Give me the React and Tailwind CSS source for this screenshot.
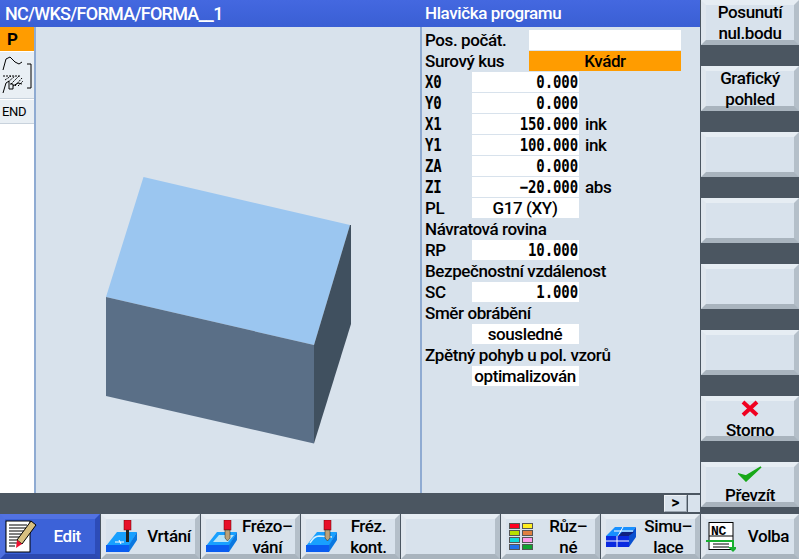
const font = "font-['Roboto','Liberation_Sans',sans-serif]";

function Key({ children, active, className = '' }) {
    const tone = active
        ? 'border-t-[#5272e2] border-l-[#4f70e0] border-r-[#2d4cb8] border-b-[#2c49b0] bg-[#3c62d8] text-white'
        : 'border-t-[#e6edf3] border-l-[#e0e7ee] border-r-[#b4bfc9] border-b-[#a9b4be] bg-[#d8e2ec] text-black';
    return (
        <div className={`relative flex items-center justify-center border-[5px] text-[17px] leading-[21px] font-medium tracking-[-0.4px] text-center ${tone} ${className}`}>
            {children}
        </div>
    );
}

function Mono({ children }) {
    return <span className="inline-block origin-center -translate-y-px scale-y-[1.25] font-['DejaVu_Sans_Mono',monospace] text-[14px] font-bold tracking-[-0.1px]">{children}</span>;
}

function Row({ label, value, unit, wide, orange, mono, align = 'right' }) {
    if (value === undefined) {
        return <div className="h-[21px] leading-[21px]">{label}</div>;
    }
    return (
        <div className="flex h-[21px]">
            <div className={`leading-[20px] ${wide ? 'w-[104px]' : 'w-[47px]'}`}>{mono ? <Mono>{label}</Mono> : label}</div>
            <div className={`h-[20px] leading-[20px] ${wide ? 'w-[152px] text-center' : 'w-[107px] pr-px'} ${orange ? 'bg-[#ff9c00]' : 'bg-white'} ${!wide && align === 'right' ? 'text-right' : ''} ${!wide && align === 'center' ? 'text-center' : ''}`}>
                {align === 'right' && !wide ? <Mono>{value}</Mono> : value}
            </div>
            {unit && <div className="pl-[6px] leading-[20px]">{unit}</div>}
        </div>
    );
}

function Cube() {
    return (
        <svg width="384" height="466" className="block" viewBox="36 27 384 466">
            <polygon points="143.5,177 350,225 314,345 106,297" fill="#9bc6f0" />
            <polygon points="106,297 314,345 314,443.5 106,396" fill="#5a6f87" />
            <polygon points="350,225 351,225 351,324 314,443.5 314,345" fill="#40505f" />
        </svg>
    );
}

function ContourIcon() {
    return (
        <svg width="32" height="42" viewBox="0 0 32 42" fill="none" stroke="#000" strokeWidth="1">
            <path d="M2 14 L5 3 L9 1 L14 6 L18 8 L21 6" />
            <path d="M26 8 H30 V32 H26" />
            <path d="M2 20 H20 M4 24 L10 20 M7 26 L14 20 M10 28 L18 20 M14 30 L21 22 M17 30 L22 25" strokeDasharray="2 1" />
            <path d="M2 37 L5 27 L8 25 V33 H12 V28 H9 M12 30 L17 27 L21 28" />
        </svg>
    );
}

function Tool({ kind }) {
    return (
        <svg width="32" height="33" viewBox="0 0 32 33">
            <polygon points="0,26 11,12 31,12 23,26" fill="#18a0ff" />
            <polygon points="0,25 23,25 23,32 0,32" fill="#0a5cf0" />
            <polygon points="23,25 31,12 31,20 23,32" fill="#0a78e0" />
            {kind === 'drill' && <path d="M9 22 H18 M13 20 L15 24" stroke="#fff" strokeWidth="1" />}
            {kind === 'mill' && <polygon points="7,22 13,15 28,15 22,22" fill="#b8e4f8" />}
            {kind === 'contour' && <path d="M4 23 Q8 16 13 16 L26 17" stroke="#d8f0ff" strokeWidth="1.5" fill="none" />}
            <rect x="18" y="0" width="7" height="10" fill="#e8102a" stroke="#600" strokeWidth="0.5" />
            {kind === 'drill'
                ? <rect x="20" y="10" width="3" height="12" fill="#222" />
                : <polygon points="19,10 24,10 24,18 21.5,21 19,18" fill="#b9a27a" stroke="#222" strokeWidth="0.5" />}
        </svg>
    );
}

function EditIcon() {
    return (
        <svg width="32" height="33" viewBox="0 0 32 33">
            <rect x="1" y="1" width="24" height="31" fill="#fff" stroke="#000" />
            <path d="M4 5 H22 M4 8 H22 M4 11 H22 M4 14 H22 M4 17 H18 M4 20 H15 M4 23 H12 M4 26 H10" stroke="#000" />
            <polygon points="26,1 31,5 17,24 12,20" fill="#d8c080" stroke="#000" />
            <polygon points="12,20 17,24 11,28" fill="#f01030" />
        </svg>
    );
}

function Swatches() {
    const colors = ['#ff0020', '#ffee20', '#b8e000', '#e08040', '#10d8d8', '#ff98e8', '#2070e8', '#10a030'];
    return (
        <div className="ml-[3px] grid grid-cols-2 gap-x-[2px] gap-y-px">
            {colors.map((color) => (
                <div key={color} className="box-content h-[4px] w-[9px] border border-[#555]" style={{ backgroundColor: color }} />
            ))}
        </div>
    );
}

function SimIcon() {
    return (
        <svg width="30" height="21" viewBox="0 0 30 21">
            <polygon points="0,10 9,1 30,1 23,10" fill="#1890ff" />
            <polygon points="0,10 23,10 23,21 0,21" fill="#0a2ae0" />
            <polygon points="23,10 30,1 30,11 23,21" fill="#0a50d0" />
            <path d="M0 15 H23 M11 10 V21 M8 5 H27 M17 1 L12 10" stroke="#fff" strokeWidth="1" />
            <polygon points="12,10 16,6 28,6 23,10" fill="#102080" />
        </svg>
    );
}

function NcIcon() {
    return (
        <svg width="30" height="30" viewBox="0 0 30 30">
            <rect x="3" y="0.5" width="24" height="27" fill="#fff" stroke="#000" />
            <text x="5" y="13" fontSize="13" fontWeight="700" fontFamily="Liberation Mono" fill="#000">NC</text>
            <path d="M3 14 H27" stroke="#000" />
            <path d="M7 22 H23 M7 25 H23" stroke="#000" />
            <path d="M0 19 H27 V26" stroke="#18b030" strokeWidth="2" fill="none" />
            <polygon points="22,25 32,25 27,30" fill="#18b030" />
        </svg>
    );
}

const rows = [
    { label: 'Pos. počát.', value: '', wide: true },
    { label: 'Surový kus', value: 'Kvádr', wide: true, orange: true },
    { label: 'X0', value: '0.000', mono: true },
    { label: 'Y0', value: '0.000', mono: true },
    { label: 'X1', value: '150.000', unit: 'ink', mono: true },
    { label: 'Y1', value: '100.000', unit: 'ink', mono: true },
    { label: 'ZA', value: '0.000', mono: true },
    { label: 'ZI', value: '−20.000', unit: 'abs', mono: true },
    { label: 'PL', value: 'G17 (XY)', align: 'center' },
    { label: 'Návratová rovina' },
    { label: 'RP', value: '10.000' },
    { label: 'Bezpečnostní vzdálenost' },
    { label: 'SC', value: '1.000' },
    { label: 'Směr obrábění' },
    { label: '', value: 'sousledné', align: 'center' },
    { label: 'Zpětný pohyb u pol. vzorů' },
    { label: '', value: 'optimalizován', align: 'center' },
];

export default function App() {
    return (
        <div className={`flex h-[559px] w-[799px] flex-col overflow-hidden bg-[#4b5661] ${font}`}>
            <div className="flex h-[514px]">
                <div className="flex w-[700px] flex-col">
                    <div className="flex h-[27px] bg-gradient-to-b from-[#4468e0] to-[#3a5fd4] text-[18px] font-medium leading-[27px] tracking-[-0.73px] text-white">
                        <div className="w-[420px] pl-[5px]">NC/WKS/FORMA/FORMA__1</div>
                        <div className="pl-[5px] text-[17px] tracking-[-0.4px]">Hlavička programu</div>
                    </div>
                    <div className="flex h-[466px] bg-[#d8e2ec]">
                        <div className="w-[34px] bg-white text-black">
                            <div className="h-[24px] bg-[#ff9c00] pl-[7px] text-[17px] font-bold leading-[24px]">P</div>
                            <div className="mt-px h-[47px] border-b border-[#c8d2dc] bg-[#e9eff4] pl-px pt-[4px]"><ContourIcon /></div>
                            <div className="mt-px h-[24px] border-b border-[#c8d2dc] bg-[#e9eff4] pl-[2px] text-[13px] leading-[24px] tracking-[-0.3px]">END</div>
                        </div>
                        <div className="w-[2px] bg-[#8fabd2]" />
                        <div className="w-[384px]"><Cube /></div>
                        <div className="w-[2px] bg-[#8fabd2]" />
                        <div className="flex-1 pl-[3px] pt-[3px] text-[17px] font-medium tracking-[-0.4px] text-black">
                            {rows.map((row) => (
                                <Row key={row.label + row.value} {...row} />
                            ))}
                        </div>
                    </div>
                    <div className="flex h-[21px] items-center justify-end gap-px">
                        <div className="h-[17px] w-[23px] border border-t-[#eef2f6] border-l-[#eef2f6] border-r-[#9aa5b0] border-b-[#9aa5b0] bg-[#d8e2ec] text-center text-[16px] font-bold leading-[14px] text-black">&gt;</div>
                        <div className="h-[17px] w-[12px] bg-[#d8e2ec]" />
                    </div>
                </div>
                <div className="flex flex-1 flex-col gap-[21px] pl-px">
                    <Key className="h-[45px]">Posunutí<br />nul.bodu</Key>
                    <Key className="h-[45px]">Grafický<br />pohled</Key>
                    <Key className="h-[45px]" />
                    <Key className="h-[45px]" />
                    <Key className="h-[45px]" />
                    <Key className="h-[45px]" />
                    <Key className="h-[45px] flex-col justify-start leading-[17px]">
                        <svg width="20" height="17" viewBox="0 0 20 17" className="-mt-px shrink-0"><path d="M3 2 L17 15 M17 2 L3 15" fill="none" stroke="#f00020" strokeWidth="4" /></svg>
                        <span className="mt-[3px]">Storno</span>
                    </Key>
                    <Key className="h-[45px] flex-col justify-start leading-[17px]">
                        <svg width="24" height="16" viewBox="0 0 24 16" className="-mt-[1px] shrink-0"><path d="M1 8 L8 15 L23 1 L8 10 Z" fill="#18a818" stroke="#18a818" strokeWidth="1.5" /></svg>
                        <span className="mt-[3px]">Převzít</span>
                    </Key>
                </div>
            </div>
            <div className="flex h-[45px] gap-px">
                <Key active className="w-[100px]">
                    <div className="flex w-full items-center justify-between pr-[14px]"><EditIcon /><span>Edit</span></div>
                </Key>
                <Key className="w-[99px]"><div className="flex w-full items-center justify-between pr-[4px]"><Tool kind="drill" /><span>Vrtání</span></div></Key>
                <Key className="w-[99px]"><div className="flex w-full items-center justify-between pr-[2px]"><Tool kind="mill" /><span>Frézo–<br />vání</span></div></Key>
                <Key className="w-[99px]"><div className="flex w-full items-center justify-between pr-[8px]"><Tool kind="contour" /><span>Fréz.<br />kont.</span></div></Key>
                <Key className="w-[100px]" />
                <Key className="w-[99px]"><div className="flex w-full items-center justify-between pr-[8px]"><Swatches /><span>Růz–<br />né</span></div></Key>
                <Key className="w-[99px]"><div className="flex w-full items-center justify-between pr-[3px]"><SimIcon /><span>Simu–<br />lace</span></div></Key>
                <Key className="w-[98px]"><div className="flex w-full items-center justify-between pr-[5px]"><NcIcon /><span>Volba</span></div></Key>
            </div>
        </div>
    );
}
